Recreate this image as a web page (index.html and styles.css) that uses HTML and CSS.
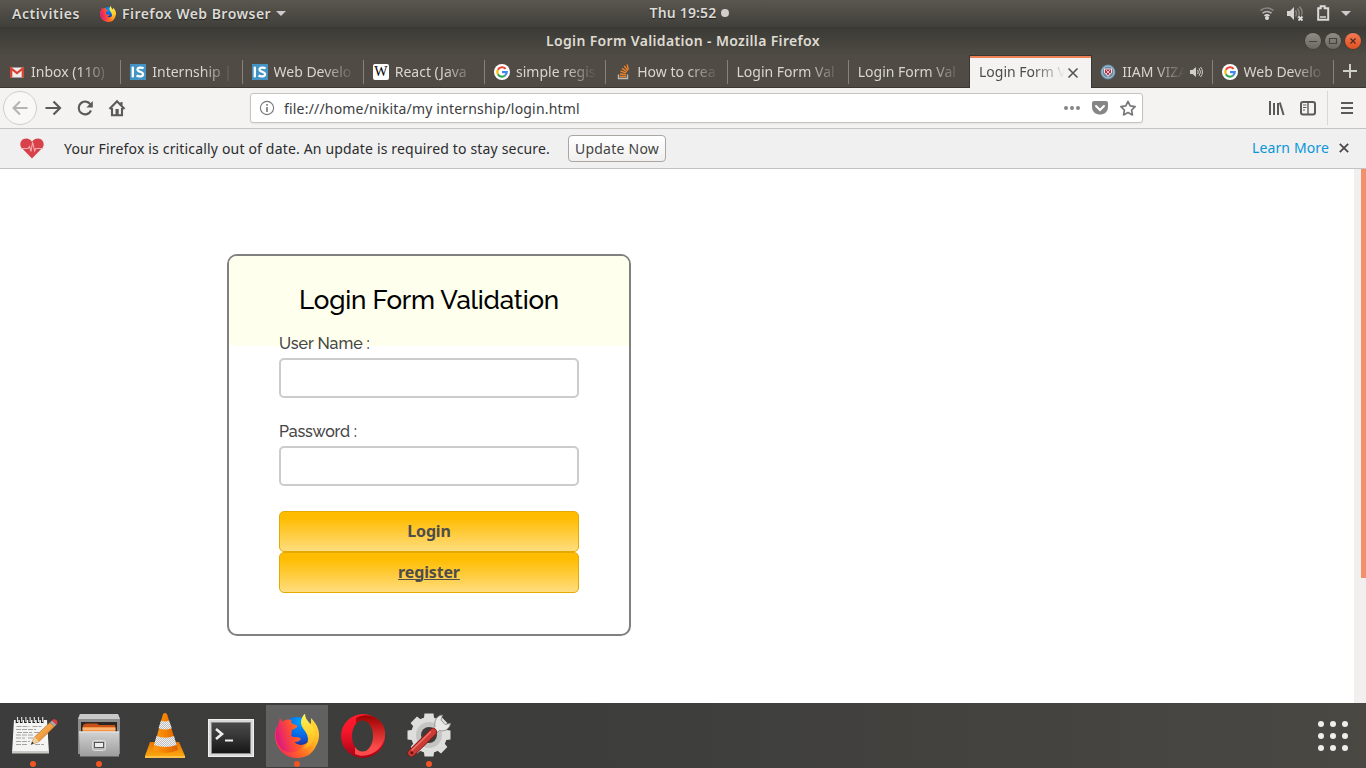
FILE: index.html
```html
<!DOCTYPE html>
<html lang="en">
<head>
<meta charset="utf-8">
<title>Login Form Validation - Mozilla Firefox</title>
<link rel="stylesheet" href="styles.css">
</head>
<body>
<svg class="defs" width="0" height="0">
  <defs>
    <linearGradient id="fxBody" x1="1" y1="0.1" x2="0.05" y2=".9"><stop offset="0" stop-color="#ffe040"/><stop offset=".35" stop-color="#ffb01e"/><stop offset=".65" stop-color="#ff6a24"/><stop offset="1" stop-color="#f0205e"/></linearGradient>
    <linearGradient id="fxHead" x1="1" y1="0" x2="0" y2=".4"><stop offset="0" stop-color="#ff8a1c"/><stop offset=".5" stop-color="#ff5030"/><stop offset="1" stop-color="#e01a7c"/></linearGradient>
    <radialGradient id="fxGlobe" cx=".6" cy=".15" r=".8"><stop offset="0" stop-color="#00a0ff"/><stop offset=".6" stop-color="#0b5fe0"/><stop offset="1" stop-color="#2c1d80"/></radialGradient>
    <linearGradient id="fxTail" x1="0" y1="0" x2="0" y2="1"><stop offset="0" stop-color="#fff45a"/><stop offset=".6" stop-color="#ffd02a"/><stop offset="1" stop-color="#ffa81e"/></linearGradient>
    <linearGradient id="drawer" x1="0" y1="0" x2="0" y2="1"><stop offset="0" stop-color="#d2d2d2"/><stop offset="1" stop-color="#9c9c9c"/></linearGradient>
    <linearGradient id="cone" x1="0" y1="0" x2="1" y2="0"><stop offset="0" stop-color="#ff9a1a"/><stop offset=".5" stop-color="#f58200"/><stop offset="1" stop-color="#d95f00"/></linearGradient>
    <linearGradient id="base" x1="0" y1="0" x2="0" y2="1"><stop offset="0" stop-color="#e87400"/><stop offset="1" stop-color="#ffae12"/></linearGradient>
    <linearGradient id="term" x1="0" y1="0" x2="0" y2="1"><stop offset="0" stop-color="#4a4a4a"/><stop offset=".5" stop-color="#333"/><stop offset="1" stop-color="#161616"/></linearGradient>
    <linearGradient id="opera" x1="0" y1="0" x2="0" y2="1"><stop offset="0" stop-color="#ff1b2d"/><stop offset=".4" stop-color="#f5172a"/><stop offset="1" stop-color="#a70014"/></linearGradient>
    <linearGradient id="operaIn" x1="0" y1="0" x2="0" y2="1"><stop offset="0" stop-color="#9c0000"/><stop offset=".8" stop-color="#ff4b4b"/></linearGradient>
    <linearGradient id="pencil" x1="0" y1="0" x2="1" y2="1"><stop offset="0" stop-color="#ffc66b"/><stop offset="1" stop-color="#e57a1c"/></linearGradient>
    <pattern id="check" width="2" height="2" patternUnits="userSpaceOnUse"><rect width="2" height="2" fill="#f2f2f2"/><rect width="1" height="1" fill="#bdbdbd"/><rect x="1" y="1" width="1" height="1" fill="#bdbdbd"/></pattern>
    <symbol id="firefox" viewBox="0 0 44 44">
      <circle cx="22" cy="19.500" r="16.500" fill="url(#fxGlobe)"/>
      <path d="M2 13C0 17 0 19 0 23c1 12 10 21 22 21 10 0 16-5 19-12 3-5 4-12 2-17-1-4-4-8-7-11v5l-5 8c5 5 4 11-1 13-4 2-8 1-11-2z" fill="url(#fxBody)"/>
      <path d="M5 3.500C5 5 7 7 8 7.500c2.500-2 5.500-2.500 8.500-1.500-.5 1.500-.3 2.500.5 3.500l5 2c.3 1.500-.3 2.200-1 2.500l-4 2c-1 2 .3 4-1 6 3.500 2 7.500 0 10 3-1.500 2.500-4 3-7 3 2 2.500 5 3.500 9 3-2 7-12 10-20 5C1 30-2 20 3 11z" fill="url(#fxHead)"/>
      <path d="M30-.5c-4 4-5 9-3 13 2 4 6 7 6 13 0 4-2 7-5 9 8-1 12-8 12-15 0-9-10-11-10-20z" fill="url(#fxTail)"/>
    </symbol>
    <symbol id="google" viewBox="0 0 16 16">
      <circle cx="8" cy="8" r="8" fill="#fff"/>
      <g fill="none" stroke-width="2.2"><path d="M11.6 4.9A4.7 4.7 0 0 0 3.9 5.7" stroke="#ea4335"/><path d="M3.9 5.7a4.7 4.7 0 0 0 0 4.6" stroke="#fbbc05"/><path d="M3.9 10.3a4.7 4.7 0 0 0 7.2 1.2" stroke="#34a853"/><path d="M8 8.2h4.7a4.7 4.7 0 0 1-1.6 3.3" stroke="#4285f4"/></g>
    </symbol>
    <symbol id="is" viewBox="0 0 16 16"><rect width="16" height="16" fill="#4394c4"/><path d="M2.8 2.7v10.6" stroke="#fff" stroke-width="2.3"/><path d="M13.6 4.4C11.9 3.2 7.5 3 7.5 5.500c0 2.700 5.600 1.900 5.600 4.800 0 2.800-4.700 2.500-6.600 1.200" fill="none" stroke="#fff" stroke-width="2.2"/></symbol>
  </defs>
</svg>

<header class="panel">
  <div class="panel-left">
    <span class="t-activities">Activities</span>
    <svg class="app-icon" width="16" height="16"><use href="#firefox"/></svg>
    <span class="t-app">Firefox Web Browser</span>
    <svg class="caret" width="10" height="5"><path d="M0 0h10L5 5z" fill="#ccc"/></svg>
  </div>
  <div class="clock"><span class="t-clock">Thu 19:52</span><i class="clock-dot"></i></div>
  <div class="tray">
    <svg width="100" height="27" viewBox="1258 0 100 27">
      <g fill="none" stroke="#858480" stroke-width="1.6"><path d="M1260.5 10.5q6.500-5 13 0"/><path d="M1262.500 13.200q4.500-3.400 9 0" stroke="#b8b7b4"/><path d="M1264.500 15.800q2.500-1.800 5 0" stroke="#ddd"/></g>
      <circle cx="1267" cy="18" r="2" fill="#ddd"/>
      <path d="M1287 11h3l4-4v13l-4-4h-3z" fill="#d4d4d0"/>
      <g fill="none" stroke="#85847f" stroke-width="1.400"><path d="M1295.500 10.500q2 3 0 6"/><path d="M1297.500 8.500q3.500 5 0 9.500"/><path d="M1299.500 6.500q4 5 2 9"/></g>
      <path d="M1298.500 16.500l4 4m0-4l-4 4" stroke="#ddd" stroke-width="1.800"/>
      <path d="M1318.200 8.200h2.500v-2h4v2h3.500v11.600h-10z" fill="none" stroke="#dadad7" stroke-width="2"/><path d="M1320 17h6" stroke="#dadad7" stroke-width="1.500"/>
      <path d="M1341 11h10l-5 5z" fill="#ccc"/>
    </svg>
  </div>
</header>

<div class="titlebar">
  <span class="t-title">Login Form Validation - Mozilla Firefox</span>
  <div class="wm">
    <i class="wm-btn"><svg width="16" height="16"><path d="M4 8.500h8" stroke="#45443e"/></svg></i>
    <i class="wm-btn"><svg width="16" height="16"><path d="M4.500 5.500h7v5h-7z" fill="none" stroke="#45443e" stroke-width="1.200"/></svg></i>
    <i class="wm-btn wm-close"><svg width="16" height="16"><path d="M5.500 5.500l5 5m0-5l-5 5" stroke="#4a2b1c" stroke-width="1.200"/></svg></i>
  </div>
</div>

<nav class="tabs">
  <div class="tab"><svg width="16" height="16"><path d="M1.500 3.500h13v10h-13z" fill="#eee"/><path d="M2.200 13.500V4.500L8 9.200l5.800-4.700v9" fill="none" stroke="#d9402f" stroke-width="2.200"/></svg><span class="tab-text">Inbox (110)</span></div>
  <div class="tab"><svg width="16" height="16"><use href="#is"/></svg><span class="tab-text">Internship |</span></div>
  <div class="tab"><svg width="16" height="16"><use href="#is"/></svg><span class="tab-text">Web Develo</span></div>
  <div class="tab"><i class="wiki">W</i><span class="tab-text">React (Java</span></div>
  <div class="tab"><svg width="16" height="16"><use href="#google"/></svg><span class="tab-text">simple regis</span></div>
  <div class="tab"><svg width="16" height="16"><path d="M3.500 10.500v4h9v-4" fill="none" stroke="#bcbbb8" stroke-width="1.400"/><path d="M5 12.500h6M5 10l6 .6M5.500 7.200l5.700 1.700M7 4.400l5 3.400M9.300 2l3.600 4.600M12 .5l1.500 5" stroke="#f48024" stroke-width="1.300"/></svg><span class="tab-text">How to crea</span></div>
  <div class="tab"><span class="tab-text">Login Form Val</span></div>
  <div class="tab"><span class="tab-text">Login Form Val</span></div>
  <div class="tab active"><span class="tab-text">Login Form V</span><svg class="x" width="16" height="16"><path d="M3.500 3.500l9 9m0-9l-9 9" stroke="#555" stroke-width="1.600"/></svg></div>
  <div class="tab playing"><svg width="16" height="16"><circle cx="8" cy="8" r="7.500" fill="#6388a2"/><circle cx="8" cy="8" r="6" fill="none" stroke="#b8cbd5"/><path d="M4 4.500h8v4L8 13 4 8.500z" fill="#e9e2e4"/><path d="M5 5.500h6v3l-3 3-3-3z" fill="#ba2b46"/><path d="M6 6l4 4m0-4l-4 4" stroke="#fff" stroke-width=".7"/></svg><span class="tab-text">IIAM VIZA</span><svg class="sound" width="14" height="14"><path d="M1 5h2.500L7 2v10L3.500 9H1z" fill="#d0cfcb"/><path d="M8.500 5q1.500 2 0 4M10 3.200q3 3.800 0 7.600M11.500 2q4 5 0 10" fill="none" stroke="#d0cfcb"/></svg></div>
  <div class="tab"><svg width="16" height="16"><use href="#google"/></svg><span class="tab-text">Web Develo</span></div>
  <div class="newtab"><svg width="14" height="14"><path d="M7 0v14M0 7h14" stroke="#cfcdc8" stroke-width="2"/></svg></div>
</nav>

<div class="toolbar">
  <div class="nav-buttons">
    <svg width="130" height="40" viewBox="0 88 130 40">
      <circle cx="20" cy="108" r="16.500" fill="#f9f8f7" stroke="#cfcecc"/>
      <path d="M27.500 108h-14m6.500-6.500-6.500 6.500 6.500 6.500" fill="none" stroke="#b5b4b3" stroke-width="2"/>
      <path d="M45.500 108h14M53.500 101.500l6.500 6.500-6.500 6.500" fill="none" stroke="#5a5a58" stroke-width="2.200"/>
      <path d="M90.500 104.500a6.400 6.400 0 1 0 .5 6" fill="none" stroke="#5a5a58" stroke-width="2.100"/><path d="M92.800 101v6.500h-6.500z" fill="#5a5a58"/>
      <path d="M109.500 109l7.500-7.800 7.500 7.800M112 108v7.200h10V108M121.500 102v3" fill="none" stroke="#5a5a58" stroke-width="2.100"/><path d="M115.500 115v-6h3.200v6" fill="#5a5a58"/>
    </svg>
  </div>
  <div class="urlbar">
    <svg width="16" height="16"><circle cx="8" cy="8" r="6.600" fill="none" stroke="#777" stroke-width="1.100"/><path d="M8 7v5M8 4v1.800" stroke="#777" stroke-width="1.600"/></svg>
    <span class="t-url">file:///home/nikita/my internship/login.html</span>
    <svg class="url-actions" width="80" height="28" viewBox="1060 94 80 28">
      <g fill="#858585"><circle cx="1066" cy="108" r="2"/><circle cx="1072" cy="108" r="2"/><circle cx="1078" cy="108" r="2"/>
      <path d="M1094 101h12q2 0 2 2v4c0 10-16 10-16 0v-4q0-2 2-2z"/></g>
      <path d="M1096 106l4 4 4-4" fill="none" stroke="#fff" stroke-width="2" stroke-linecap="round"/>
      <path d="M1128 101.500l2.200 4.400 4.900.7-3.500 3.400.8 4.900-4.400-2.300-4.400 2.300.8-4.900-3.500-3.400 4.900-.7z" fill="none" stroke="#777" stroke-width="1.700" stroke-linejoin="round"/>
    </svg>
  </div>
  <svg class="right-tools" width="100" height="40" viewBox="1266 88 100 40">
    <path d="M1270 101v14M1274 103v12M1278 103v12" stroke="#5a5a58" stroke-width="2"/><path d="M1279.800 102.500l3.800 12.500" stroke="#5a5a58" stroke-width="2"/>
    <rect x="1301" y="102" width="14" height="12.500" rx="2" fill="none" stroke="#5a5a58" stroke-width="2"/><path d="M1308 102v12" stroke="#5a5a58" stroke-width="1.400"/><path d="M1303 105h3.500m-3.500 2.500h3.500m-3.500 2.500h2" stroke="#5a5a58"/>
    <path d="M1327.500 91v34" stroke="#d8d7d5"/>
    <path d="M1341 103h12M1341 108h12M1341 113h12" stroke="#5a5a58" stroke-width="2"/>
  </svg>
</div>

<div class="notice">
  <svg width="24" height="21"><path d="M12 20.500 1.800 10C-1.500 6.500 1 .5 6 .5c3 0 5 1.500 6 3.500C13 2 15 .5 18 .5c5 0 7.500 6 4.200 9.500z" fill="#d9414a"/><path d="M1 10.500h7l1.500-2 1.500 5 1.600-9.500 2 9 1.200-2.500H23" fill="none" stroke="#f4a9ac" stroke-width="1.100"/></svg>
  <span class="t-notice">Your Firefox is critically out of date. An update is required to stay secure.</span>
  <button class="update"><span class="t-update">Update Now</span></button>
  <a class="t-learn">Learn More</a>
  <svg class="notice-x" width="10" height="10"><path d="M.8.8l8.400 8.400m0-8.400L.8 9.200" stroke="#4a4a4a" stroke-width="1.800"/></svg>
</div>

<main class="page">
  <section class="card">
    <h2 class="card-title">Login Form Validation</h2>
    <form class="form">
      <label>User Name :</label>
      <input type="text">
      <label class="t-pass">Password :</label>
      <input type="password">
      <button type="button" class="btn">Login</button>
      <button type="button" class="btn"><a class="t-register">register</a></button>
    </form>
  </section>
  <div class="scrollbar"><i class="thumb"></i></div>
</main>

<footer class="dock">
  <div class="slot running"><svg width="66" height="65">
    <path d="M14 17h33l2 33H12z" fill="#f4f4f2"/><path d="M12 48h37v2.500H12z" fill="#c9c9c6"/>
    <path d="M17 16v4m4.200-4v4m4.200-4v4m4.200-4v4m4.200-4v4m4.200-4v4m4.200-4v4" stroke="#222" stroke-width="2.600"/><path d="M17.500 14v5m4.200-5v5m4.200-5v5m4.200-5v5m4.200-5v5m4.200-5v5m4.200-5v5" stroke="#ddd" stroke-width="1.200"/>
    <path d="M16.500 23.500h13m3 0h9M16 26.500h20M17 29.500h15m2 0h5M16 32h18M16 35h9m3 0h8M16 38.500h14M16 41.500h11m8 0h9" stroke="#a4a4a2" stroke-width="1" stroke-dasharray="5 1"/>
    <path d="M31 41.500l3.500-7.500L50 19.500l4.500 4L39 38.500z" fill="url(#pencil)" stroke="#a9631f" stroke-width=".6"/><path d="M31 41.500l3.500-7.500 4.500 4.500z" fill="#efd0a0"/><path d="M31 41.500l1.300-2.800 1.500 1.500z" fill="#222"/>
    <path d="M50 19.500l2-2 4.500 4-2 2z" fill="#aaa"/><path d="M52 17.500c2-3 7 0 5 3.500l-.7.700z" fill="#e23a43"/>
  </svg></div>
  <div class="slot running"><svg width="66" height="65">
    <path d="M14 11h38l2 5v35H12V16z" fill="#8d8d8d"/><path d="M14 11h38l2 5H12z" fill="#c9c9c9"/><path d="M15 19h36v10H15z" fill="#2d2522"/>
    <path d="M17 22l3-1.500h11l2 1.500h16v7H17z" fill="#c7511b"/><path d="M16.500 24h33v5h-33z" fill="#f39446"/><path d="M16.500 26h33" stroke="#ffd09c"/>
    <path d="M13 28.500h40v25H14z" fill="url(#drawer)"/><path d="M13 29h40" stroke="#e8e8e8"/>
    <rect x="26.500" y="37.500" width="13" height="10" rx="2" fill="#bcbcbc" stroke="#ddd"/><rect x="28.500" y="39.500" width="9" height="5" fill="#eee" stroke="#555"/>
  </svg></div>
  <div class="slot"><svg width="66" height="65">
    <path d="M18 39h29l6 14v2H13v-2z" fill="url(#base)"/><path d="M13 53h40v2H13z" fill="#ffc04a"/>
    <path d="M31 11q2-2 4 0l11 36q-13 6-25 0z" fill="url(#cone)"/>
    <path d="M29 17.500q4 2 8 0l2.800 7.800q-6.500 2.500-13.300 0zM24.500 33q8.500 3.500 17.500 0l2.500 9q-11 4-22.500 0z" fill="url(#check)"/>
  </svg></div>
  <div class="slot"><svg width="66" height="65">
    <rect x="10.500" y="16.500" width="45" height="37" fill="#d9d9d9" stroke="#f0f0f0"/><rect x="13" y="19" width="40" height="32" fill="#8a8a8a"/><rect x="14" y="20" width="38" height="30" fill="url(#term)"/><path d="M18 26l6 5-6 5" fill="none" stroke="#eee" stroke-width="2.600"/><path d="M27 37.500h8" stroke="#eee" stroke-width="2"/>
  </svg></div>
  <div class="slot running selected"><svg width="66" height="65"><use href="#firefox" x="11" y="11" width="44" height="44"/></svg></div>
  <div class="slot"><svg width="66" height="65">
    <circle cx="33" cy="33" r="22" fill="url(#opera)"/><path d="M25 51c6 3 12 2 18-1 16-9 16-29 1-36-5-2-11-3-18 1z" fill="url(#operaIn)"/><ellipse cx="32.500" cy="33" rx="10.500" ry="15.500" fill="#3c3d3b"/>
  </svg></div>
  <div class="slot running"><svg width="66" height="65">
    <g fill="#dededc"><circle cx="33" cy="32" r="18"/><path d="M28.500 10.500h9l1 8h-11zM28.500 53.500h9l1-8h-11z"/><path d="M28.500 10.500h9l1 8h-11zM28.500 53.500h9l1-8h-11z" transform="rotate(45 33 32)"/><path d="M28.500 10.500h9l1 8h-11zM28.500 53.500h9l1-8h-11z" transform="rotate(90 33 32)"/><path d="M28.500 10.500h9l1 8h-11zM28.500 53.500h9l1-8h-11z" transform="rotate(135 33 32)"/></g>
    <circle cx="33" cy="32" r="13" fill="#c4c4c2"/><circle cx="33" cy="32" r="8" fill="#3c3d3b"/>
    <path d="M35 27.500l4-4C38 17 41 12.500 46.500 12l-1.500 5 4 4.500 5.500-1.200c-1 5.700-5.500 8.700-11 7.200l-4.500 4z" fill="#e9e9e7" stroke="#858585" stroke-width=".8"/>
    <path d="M15.500 50L37 29" stroke="#7d1717" stroke-width="8" stroke-linecap="round"/><path d="M15.500 50L37 29" stroke="#cc3b35" stroke-width="6.400" stroke-linecap="round"/><path d="M15.500 47.500L35 28.500" stroke="#ee7a72" stroke-width="1.200"/><circle cx="15.800" cy="49.800" r="1.500" fill="#6d1111"/>
  </svg></div>
  <svg class="apps" width="66" height="65" viewBox="1300 703 66 65"><g fill="#eeeeec"><circle cx="1321" cy="724" r="3"/><circle cx="1333" cy="724" r="3"/><circle cx="1345" cy="724" r="3"/><circle cx="1321" cy="736" r="3"/><circle cx="1333" cy="736" r="3"/><circle cx="1345" cy="736" r="3"/><circle cx="1321" cy="748" r="3"/><circle cx="1333" cy="748" r="3"/><circle cx="1345" cy="748" r="3"/></g></svg>
</footer>
</body>
</html>
```
FILE: styles.css
```css
* { box-sizing: border-box; }
body { margin: 0; width: 1366px; height: 768px; overflow: hidden; background: #fff; font-family: "Noto Sans", "Open Sans", sans-serif; font-size: 14px; display: flex; flex-direction: column; white-space: nowrap; }
svg { display: block; flex: none; }
.defs { position: absolute; }
i { font-style: normal; }
.panel { height: 27px; flex: none; display: grid; grid-template-columns: 1fr auto 1fr; align-items: center; background: linear-gradient(#5a574f, #403f3a); color: #dcdad5; font-weight: 600; text-shadow: 0 1px 1px #222; }
.panel-left { display: flex; align-items: center; padding-left: 12px; }
.t-activities { width: 88px; letter-spacing: .55px; }
.t-app { margin-left: 6px; width: 154px; letter-spacing: .46px; }
.clock { display: flex; align-items: center; gap: 4px; padding: 0 0 2px 12px; letter-spacing: .18px; }
.clock-dot { width: 8px; height: 8px; border-radius: 50%; background: #d0cfcc; }
.tray { display: flex; justify-content: flex-end; padding-right: 8px; }
.titlebar { height: 28px; flex: none; display: grid; grid-template-columns: 1fr auto 1fr; align-items: center; background: linear-gradient(#3b3a36, #4e4b44); color: #dfdbd2; font-weight: 600; }
.t-title { grid-column: 2; letter-spacing: .35px; padding-bottom: 2px; }
.wm { display: flex; justify-content: flex-end; gap: 4px; padding-right: 5px; }
.wm-btn { width: 16px; height: 16px; border-radius: 50%; background: linear-gradient(#8f8d86, #6a6861); box-shadow: 0 0 0 .5px #33322e; }
.wm-close { background: linear-gradient(#f37a55, #e2501f); }
.tabs { height: 33px; flex: none; display: flex; background: #504c45; border-bottom: 1px solid #393733; color: #d9d6cf; }
.tab { width: 121.250px; flex: none; display: flex; align-items: center; gap: 6px; padding: 2px 9px 0; background: linear-gradient(#85827b, #85827b) right 5px / 1px 24px no-repeat; }
.tab-text { flex: 1; padding-bottom: 2px; overflow: hidden; -webkit-mask-image: linear-gradient(to right, #000 calc(100% - 32px), transparent); mask-image: linear-gradient(to right, #000 calc(100% - 32px), transparent); }
.tab.active { background: #f4f3f2; color: #4c4c4c; height: 33px; border-top: 1px solid #393733; box-shadow: inset 0 2px #ef8058, -1px 0 #393733, 1px 0 #393733; padding: 1px 10px 0 9px; gap: 0; }
.tab.playing { gap: 4px; padding-right: 10px; }
.tab.playing .tab-text { margin-left: 2px; }
.newtab { flex: 1; display: flex; align-items: center; justify-content: center; }
.wiki { width: 16px; height: 16px; border-radius: 2px; background: #fff; color: #000; font: 14px/16px "Liberation Serif", serif; display: flex; justify-content: center; flex: none; }
.toolbar { height: 41px; flex: none; display: flex; background: #f4f3f2; border-bottom: 1px solid #c6c4c2; }
.nav-buttons { width: 250px; }
.urlbar { width: 893px; height: 30px; margin-top: 5px; background: #fff; border: 1px solid #c5c3c1; border-radius: 3px; box-shadow: 0 1px 2px #0001; display: flex; align-items: center; padding: 0 2px 0 8px; color: #3d3d3d; }
.t-url { flex: 1; margin-left: 9px; letter-spacing: .19px; }
.right-tools { margin-left: auto; }
.notice { height: 40px; flex: none; display: flex; align-items: center; background: #f0f0f1; border-bottom: 1px solid #c3c3c3; padding: 0 17px 0 20px; color: #2c2c2c; }
.t-notice { margin-left: 20px; width: 504px; letter-spacing: .168px; }
.update { width: 98px; height: 27px; padding: 0; border: 1px solid #aaa6a2; border-radius: 4px; background: linear-gradient(#fff, #f1f0ef); font: inherit; color: #444; letter-spacing: .24px; }
.t-learn { margin-left: auto; margin-right: 10px; padding-bottom: 2px; color: #0996db; letter-spacing: .13px; }
.notice-x { margin-bottom: 2px; }
.page { flex: 1; display: flex; min-height: 0; background: #fff; }
.card { width: 404px; height: 382px; margin: 85px 0 0 227px; flex: none; border: 2px solid #808080; border-radius: 10px; font-family: Raleway, Lato, sans-serif; }
.card-title { margin: 0; height: 90px; background: #feffed; border-radius: 8px 8px 0 0; text-align: center; font-size: 26px; font-weight: 500; line-height: 88px; letter-spacing: -.22px; color: #000; }
.form { display: flex; flex-direction: column; padding: 0 50px; margin-top: -14px; color: #464646; }
.form label { height: 26px; font-size: 16px; line-height: 24px; font-weight: 500; letter-spacing: -.04px; }
.form .t-pass { letter-spacing: -.18px; }
.form input { width: 300px; height: 40px; margin: 0 0 22px; border: 2px solid #ccc; border-radius: 5px; background: #fff; }
.form input[type=password] { margin-bottom: 25px; }
.btn { width: 300px; height: 41px; padding: 0 0 2px; border: 1px solid #e5a900; border-radius: 5px; background: linear-gradient(#ffbc00 15%, #ffdd7f); font: 700 16px "Noto Sans", sans-serif; letter-spacing: -.15px; color: #4e4d4b; }
.t-register { text-decoration: underline; text-decoration-thickness: 1px; }
.scrollbar { width: 12px; margin-left: auto; background: #f1f0ef; display: flex; justify-content: flex-end; }
.thumb { width: 5px; height: 409px; background: #f28f6c; }
.dock { height: 65px; flex: none; display: flex; background: linear-gradient(90deg, #3b3c3b, #3e3e3c 50%, #4a4843); }
.slot { width: 66px; position: relative; }
.running::after { content: ""; position: absolute; left: 30px; bottom: 1px; width: 6px; height: 6px; border-radius: 50%; background: #f05423; }
.selected { background: linear-gradient(#616161, #616161) 2px 2px / 62px 62px no-repeat; }
.apps { margin-left: auto; }
```
